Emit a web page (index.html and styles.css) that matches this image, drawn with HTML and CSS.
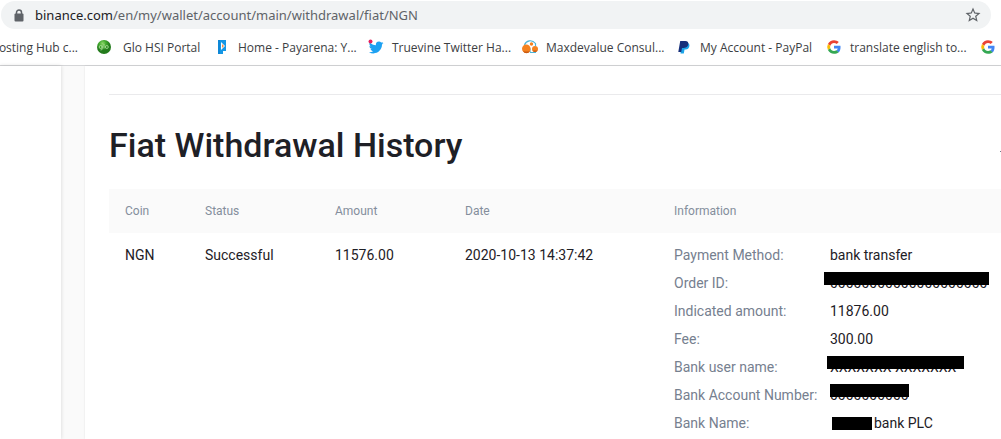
FILE: index.html
```html
<!DOCTYPE html>
<html lang="en">
<head>
    <meta charset="UTF-8">
    <meta name="viewport" content="width=device-width, initial-scale=1.0">
    <title>Fiat Withdrawal History</title>
    <link rel="stylesheet" href="styles.css">
</head>
<body>
    <header class="browser">
        <div class="address-bar">
            <svg class="lock" viewBox="0 0 10 13" aria-hidden="true">
                <path d="M2.5 5V3.5a2.5 2.5 0 0 1 5 0V5" fill="none" stroke="#5f6368" stroke-width="1.5"/>
                <rect x="0.5" y="4.5" width="9" height="8" rx="1" fill="#5f6368"/>
            </svg>
            <div class="url"><span class="host">binance.com</span>/en/my/wallet/account/main/withdrawal/fiat/NGN</div>
            <button class="star" aria-label="Bookmark this page">
                <svg viewBox="0 0 24 24" aria-hidden="true"><path fill="#5f6368" d="M22 9.24l-7.19-.62L12 2 9.19 8.63 2 9.24l5.46 4.73L5.82 21 12 17.27 18.18 21l-1.63-7.03L22 9.24zM12 15.4l-3.76 2.27 1-4.28-3.32-2.88 4.38-.38L12 6.1l1.71 4.04 4.38.38-3.32 2.88 1 4.28L12 15.4z"/></svg>
            </button>
        </div>
        <nav class="bookmarks">
            <a class="bookmark first" href="#">Hosting Hub c...</a>
            <a class="bookmark short" href="#">
                <svg viewBox="0 0 16 16" aria-hidden="true">
                    <defs><radialGradient id="glo" cx="0.4" cy="0.25"><stop offset="0" stop-color="#8fd76d"/><stop offset="0.5" stop-color="#41a82c"/><stop offset="1" stop-color="#237b1c"/></radialGradient></defs>
                    <circle cx="8" cy="8" r="7" fill="url(#glo)"/>
                    <g fill="none" stroke="#b5e3a3" stroke-width="0.8"><circle cx="4.7" cy="8" r="1.5"/><path d="M6.2 6.5V10q0 1-1.7 1M8 5v4.5"/><circle cx="10.8" cy="8" r="1.5"/></g>
                </svg>
                Glo HSI Portal
            </a>
            <a class="bookmark" href="#">
                <svg viewBox="0 0 16 16" aria-hidden="true">
                    <path d="M4 1h8v11H9v3H4z" fill="#1597e5"/>
                    <path d="M7 3v8l4-4z" fill="#fff"/>
                    <path d="M8 5v4l2-2z" fill="#ef8c48"/>
                    <path d="M5 1v14" stroke="#0878c8"/>
                </svg>
                Home - Payarena: Y...
            </a>
            <a class="bookmark" href="#">
                <svg viewBox="0 0 16 16" aria-hidden="true">
                    <path d="M15.5 4c-.6.3-1.1.4-1.7.5.6-.4 1-.9 1.300-1.600-.6.3-1.200.6-1.900.7a3 3 0 0 0-5.200 2.700C5.500 6.200 3.300 5 1.800 3.200c-.8 1.400-.4 3.100.9 4-.5 0-1-.1-1.300-.3 0 1.500 1 2.700 2.400 3-.4.1-.9.1-1.300 0 .4 1.200 1.500 2 2.800 2.100-1.300 1-2.800 1.400-4.400 1.200C7 16.500 14 12.500 14 5.600c.6-.4 1.100-1 1.500-1.600z" fill="#1da1f2"/>
                    <circle cx="2.500" cy="2.500" r="2" fill="#e8215d"/>
                </svg>
                Truevine Twitter Ha...
            </a>
            <a class="bookmark" href="#">
                <svg viewBox="0 0 16 16" aria-hidden="true">
                    <path d="M2.500 6C4 1.500 10 0 13.500 4.500V7M8 9.500q-.5 2.500.5 4H14" fill="none" stroke="#4db3d6" stroke-width="1.200"/>
                    <circle cx="4.300" cy="9.800" r="4.300" fill="#f5821f"/>
                    <circle cx="13" cy="10" r="3" fill="#f5821f"/>
                    <circle cx="9.500" cy="5" r="1.700" fill="#f5821f"/>
                    <path d="M1 12q3.500 1 7 0-1 2.200-3.500 2.200T1 12zM10.500 11.500h5q-1 1.500-2.500 1.500t-2.500-1.500z" fill="#c95a12"/>
                </svg>
                Maxdevalue Consul...
            </a>
            <a class="bookmark medium" href="#">
                <svg viewBox="0 0 16 16" aria-hidden="true">
                    <path d="M5.500 4h6.300c2 .8 2 3 1 4.700-.8 1.500-2.500 1.800-4.300 1.800L7.800 14.500H4.500z" fill="#1ca4e8"/>
                    <path d="M4.200 2h5c2.600 0 3.600 1.500 3 3.800-.6 2.400-2.500 3.200-4.900 3.200H6l-.8 4H2.300z" fill="#17307b"/>
                </svg>
                My Account - PayPal
            </a>
            <a class="bookmark" href="#">
                <svg viewBox="0 0 48 48" aria-hidden="true"><use href="#google"/></svg>
                translate english to...
            </a>
            <a class="bookmark" href="#" aria-label="Google">
                <svg viewBox="0 0 48 48" aria-hidden="true">
                    <g id="google">
                        <path fill="#ea4335" d="M24 12c3.200 0 6 1.100 8.200 3.200l6.100-6.100C34.600 5.700 29.700 3.600 24 3.600 16 3.600 9.100 8.200 5.800 14.900l7.100 5.500C14.600 15.500 18.900 12 24 12z"/>
                        <path fill="#4285f4" d="M43.600 24.500c0-1.500-.1-2.700-.4-4H24v8.100h11.100c-.5 2.800-2 4.900-4.200 6.400l6.900 5.300c4-3.700 5.800-9.200 5.800-15.800z"/>
                        <path fill="#fbbc05" d="M12.900 27.600a12 12 0 0 1 0-7.200l-7.100-5.500a20.400 20.400 0 0 0 0 18.200z"/>
                        <path fill="#34a853" d="M24 44.400c5.500 0 10.200-1.800 13.800-5l-6.900-5.300C29 35.400 26.700 36 24 36c-5.100 0-9.400-3.500-11.100-8.400l-7.100 5.500C9.100 39.800 16 44.400 24 44.400z"/>
                    </g>
                </svg>
            </a>
        </nav>
    </header>

    <div class="page">
        <aside class="sidebar"></aside>
        <main class="content">
            <hr class="divider">
            <div class="heading-row">
                <h1 class="title">Fiat Withdrawal History</h1>
                <span class="mark"></span>
            </div>
            <table class="history">
                <thead>
                    <tr>
                        <th class="coin">Coin</th>
                        <th class="status">Status</th>
                        <th class="amount">Amount</th>
                        <th class="date">Date</th>
                        <th>Information</th>
                    </tr>
                </thead>
                <tbody>
                    <tr>
                        <td>NGN</td>
                        <td>Successful</td>
                        <td>11576.00</td>
                        <td>2020-10-13 14:37:42</td>
                        <td>
                            <dl class="info">
                                <dt>Payment Method:</dt>
                                <dd>bank transfer</dd>
                                <dt>Order ID:</dt>
                                <dd><span class="redacted order-id">00000000000000000000</span></dd>
                                <dt>Indicated amount:</dt>
                                <dd>11876.00</dd>
                                <dt>Fee:</dt>
                                <dd>300.00</dd>
                                <dt>Bank user name:</dt>
                                <dd><span class="redacted user-name">XXXXXXX XXXXXXX</span></dd>
                                <dt>Bank Account Number:</dt>
                                <dd><span class="redacted account-number">0000000000</span></dd>
                                <dt>Bank Name:</dt>
                                <dd><span class="bank-name"></span>bank PLC</dd>
                            </dl>
                        </td>
                    </tr>
                </tbody>
            </table>
        </main>
    </div>
</body>
</html>
```
FILE: styles.css
```css
* {
    box-sizing: border-box;
}

body {
    margin: 0;
    min-height: 100vh;
    display: flex;
    flex-direction: column;
    overflow: hidden;
    background: #fff;
    font-family: Roboto, sans-serif;
    font-size: 14px;
    color: #1e2026;
}

.browser {
    font-family: "Noto Sans", "Open Sans", sans-serif;
    border-bottom: 1px solid #d5d6d8;
}

.address-bar {
    display: flex;
    align-items: center;
    height: 28px;
    margin: 1px 10px 0 1px;
    padding: 0 8px 0 13px;
    border-radius: 14px;
    background: #f1f3f4;
}

.lock {
    width: 10px;
    height: 13px;
}

.url {
    flex: 1;
    margin-left: 11px;
    font-size: 13px;
    color: #5f6368;
    white-space: nowrap;
}

.host {
    color: #202124;
}

.star {
    width: 20px;
    height: 20px;
    padding: 1px;
    border: none;
    background: none;
}

.star svg {
    display: block;
    width: 18px;
    height: 18px;
}

.bookmarks {
    display: flex;
    align-items: center;
    height: 36px;
    overflow: hidden;
    font-family: "Open Sans", sans-serif;
}

.bookmark {
    display: flex;
    flex: none;
    align-items: center;
    gap: 8px;
    width: 154px;
    font-size: 12px;
    color: #3c4043;
    text-decoration: none;
    white-space: nowrap;
}

.bookmark svg {
    flex: none;
    width: 16px;
    height: 16px;
}

.bookmark.first {
    width: 96px;
    padding-right: 18px;
    justify-content: flex-end;
}

.bookmark.short {
    width: 118px;
    gap: 11px;
}

.bookmark.medium {
    width: 150px;
}

.page {
    display: flex;
    flex: 1;
    background: #fafafa;
}

.sidebar {
    flex: none;
    width: 61px;
    background: #fff;
    box-shadow: 0 0 4px rgba(0, 0, 0, 0.15);
}

.content {
    flex: 1;
    margin-left: 24px;
    padding: 28px 0 0 24px;
    background: #fff;
    box-shadow: 0 0 2px rgba(0, 0, 0, 0.1);
}

.divider {
    margin: 0;
    border: none;
    border-top: 1px solid #eaeaec;
}

.heading-row {
    display: flex;
    align-items: center;
    justify-content: space-between;
    height: 94px;
    padding-top: 6px;
}

.title {
    margin: 0;
    font-size: 34px;
    font-weight: 500;
    white-space: nowrap;
}

.mark {
    width: 1px;
    height: 1px;
    margin-top: 12px;
    background: #707a8a;
}

.history {
    width: 100%;
    table-layout: fixed;
    border-collapse: collapse;
    text-align: left;
}

.history th {
    height: 44px;
    padding: 0 0 0 16px;
    background: #fafafa;
    font-size: 12px;
    font-weight: 400;
    color: #848e9c;
}

.history td {
    padding: 8px 0 0 16px;
    line-height: 28px;
    vertical-align: top;
    white-space: nowrap;
}

.coin {
    width: 80px;
}

.status,
.amount {
    width: 130px;
}

.date {
    width: 209px;
}

.info {
    display: grid;
    grid-template-columns: 156px 1fr;
    grid-auto-rows: 28px;
    margin: 0;
}

.info dt {
    color: #76808f;
}

.info dd {
    display: flex;
    align-items: center;
    margin: 0;
}

.redacted {
    position: relative;
}

/* black bar over the hidden value */
.redacted::after {
    content: "";
    position: absolute;
    top: 3px;
    left: 0;
    height: 13px;
    background: #000;
}

.order-id::after {
    left: -6px;
    width: 165px;
}

.user-name::after {
    left: -3px;
    width: 137px;
}

.account-number::after {
    width: 79px;
}

.bank-name {
    width: 40px;
    height: 13px;
    margin: 0 2px;
    background: #000;
}
```
